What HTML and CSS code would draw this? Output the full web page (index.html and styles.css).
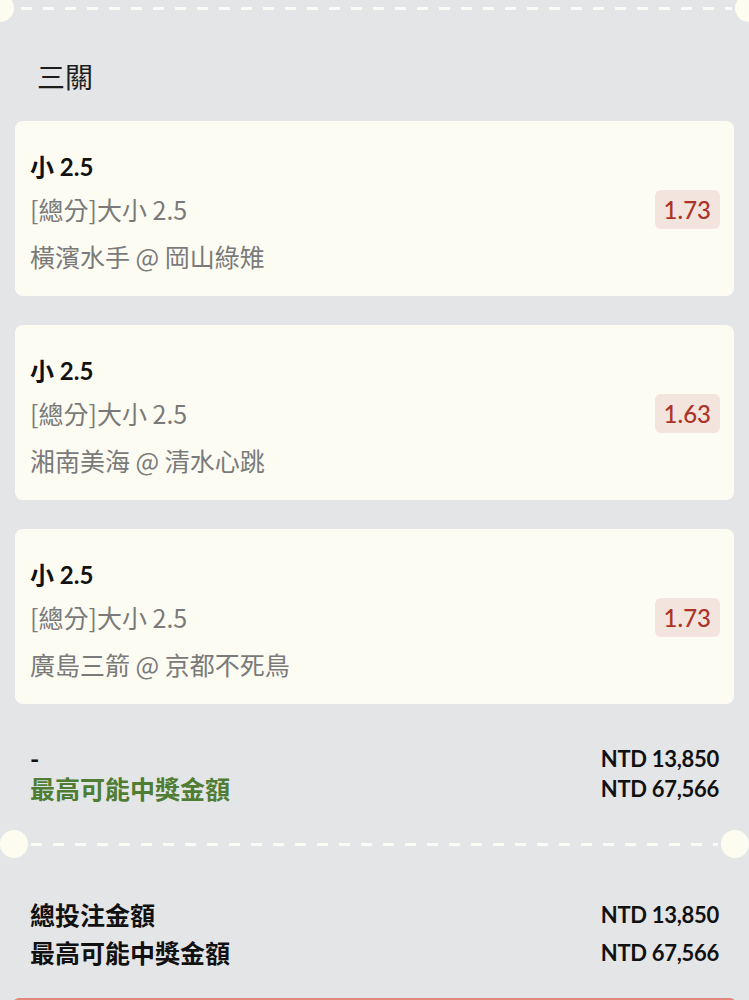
FILE: index.html
```html
<!DOCTYPE html>
<html lang="zh-Hant">
<head>
    <meta charset="UTF-8">
    <meta name="viewport" content="width=device-width, initial-scale=1.0">
    <title>三關</title>
    <link rel="stylesheet" href="styles.css">
</head>
<body>
    <main class="slip">
        <div class="divider divider-top">
            <span class="hole"></span>
            <span class="dashes"></span>
            <span class="hole"></span>
        </div>

        <h2 class="slip-title">三關</h2>

        <div class="bets">
            <div class="bet-card">
                <div class="bet-info">
                    <div class="bet-pick">小 2.5</div>
                    <div class="bet-market">[總分]大小 2.5</div>
                    <div class="bet-match">橫濱水手 @ 岡山綠雉</div>
                </div>
                <span class="odds">1.73</span>
            </div>
            <div class="bet-card">
                <div class="bet-info">
                    <div class="bet-pick">小 2.5</div>
                    <div class="bet-market">[總分]大小 2.5</div>
                    <div class="bet-match">湘南美海 @ 清水心跳</div>
                </div>
                <span class="odds">1.63</span>
            </div>
            <div class="bet-card">
                <div class="bet-info">
                    <div class="bet-pick">小 2.5</div>
                    <div class="bet-market">[總分]大小 2.5</div>
                    <div class="bet-match">廣島三箭 @ 京都不死鳥</div>
                </div>
                <span class="odds">1.73</span>
            </div>
        </div>

        <div class="summary">
            <div class="summary-row">
                <span>-</span>
                <span class="amount">NTD 13,850</span>
            </div>
            <div class="summary-row">
                <span class="win-label">最高可能中獎金額</span>
                <span class="amount">NTD 67,566</span>
            </div>
        </div>

        <div class="divider">
            <span class="hole"></span>
            <span class="dashes"></span>
            <span class="hole"></span>
        </div>

        <div class="totals">
            <div class="totals-row">
                <span>總投注金額</span>
                <span class="amount">NTD 13,850</span>
            </div>
            <div class="totals-row">
                <span>最高可能中獎金額</span>
                <span class="amount">NTD 67,566</span>
            </div>
        </div>

        <button class="submit" aria-label="確認投注"></button>
    </main>
</body>
</html>
```

FILE: styles.css
```css
* {
    padding: 0;
    margin: 0;
    box-sizing: border-box;
}
html, body {
    height: 1000px;
    overflow: hidden;
}
body {
    background-color: #e4e5e7;
    font-family: Lato, "Noto Sans CJK TC", sans-serif;
    color: #111;
}
.slip {
    display: flex;
    flex-direction: column;
}
.divider {
    display: flex;
    align-items: center;
    height: 28px;
    margin-top: 27px;
}
.divider-top {
    margin: -6px -14px 0;
}
.hole {
    flex: none;
    width: 28px;
    height: 28px;
    border-radius: 50%;
    background-color: #fdfcf1;
}
.dashes {
    flex: 1;
    height: 3px;
    margin: 0 3px;
    background: repeating-linear-gradient(90deg, #fbfbf6 0 11px, transparent 11px 22px);
}
.divider-top .dashes {
    margin: 0 3px 0 7px;
}
.slip-title {
    margin-top: 34px;
    padding-left: 37px;
    font-family: "Noto Sans CJK TC", sans-serif;
    font-size: 28px;
    font-weight: 400;
    line-height: 40px;
    color: #1c1c1c;
}
.bets {
    display: flex;
    flex-direction: column;
    gap: 29px;
    margin: 25px 15px 0;
}
.bet-card {
    display: flex;
    align-items: center;
    justify-content: space-between;
    height: 175px;
    padding: 24px 14px 16px 15px;
    background-color: #fdfcf3;
    border-radius: 8px;
}
.bet-info {
    display: flex;
    flex-direction: column;
    align-self: flex-start;
    font-size: 24px;
    line-height: 43px;
}
.bet-pick {
    font-weight: 700;
    color: #111;
}
.bet-market, .bet-match {
    font-family: "Noto Sans CJK TC", sans-serif;
    font-size: 25px;
    font-weight: 400;
    color: #7a7a7a;
}
.bet-match {
    margin-top: 4px;
}
.odds {
    margin-top: -6px;
    padding: 0 9px;
    line-height: 39px;
    font-size: 24px;
    font-weight: 500;
    color: #ad3228;
    background-color: #f3e4de;
    border-radius: 6px;
}
.summary {
    margin-top: 39px;
    padding: 0 30px;
}
.summary-row, .totals-row {
    display: flex;
    justify-content: space-between;
    align-items: center;
    font-weight: 700;
}
.summary-row {
    height: 30px;
    font-size: 25px;
}
.win-label {
    color: #4e7d33;
}
.amount {
    font-size: 22px;
    font-weight: 700;
    letter-spacing: -0.3px;
}
.totals {
    margin-top: 37px;
    padding: 0 30px;
}
.totals-row {
    height: 38px;
    font-size: 25px;
}
.submit {
    margin: 27px 13px 0;
    height: 56px;
    border: 2px solid #e3867a;
    border-radius: 6px;
    background-color: #c0392b;
}
```
